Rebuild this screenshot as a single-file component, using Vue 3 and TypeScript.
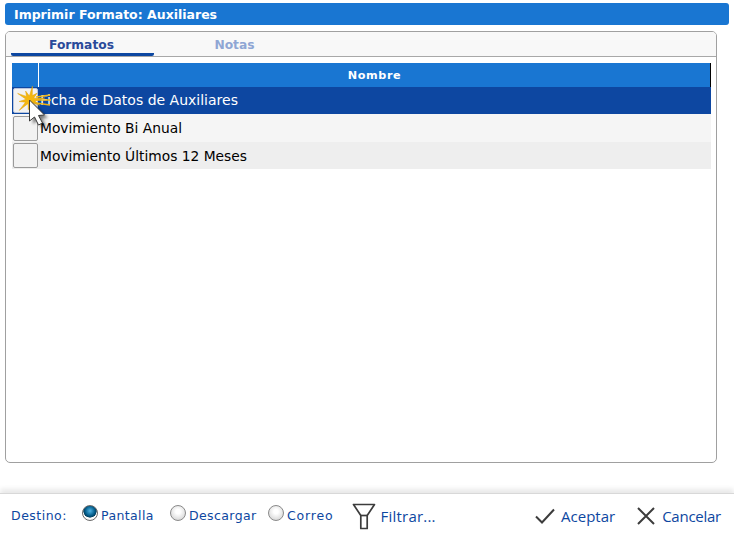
<script setup lang="ts">
interface Row { name: string; cls: string }
const rows: Row[] = [
  { name: 'Ficha de Datos de Auxiliares', cls: 'sel' },
  { name: 'Movimiento Bi Anual', cls: 'odd' },
  { name: 'Movimiento Últimos 12 Meses', cls: 'even' },
]
const cx = 18
const cy = 18
const radii = [14, 5, 10, 4, 15, 5, 11, 4, 14, 5, 10, 4, 15, 5, 11, 4, 14, 5, 10, 4]
const star = radii
  .map((r, i) => {
    const a = ((i * 18 - 80) * Math.PI) / 180
    return `${(cx + r * Math.cos(a)).toFixed(1)},${(cy + r * Math.sin(a)).toFixed(1)}`
  })
  .join(' ')
</script>

<template>
  <div class="page">
    <div class="title">Imprimir Formato: Auxiliares</div>
    <div class="panel">
      <div class="tabs">
        <div class="tab active">Formatos</div>
        <div class="tab second">Notas</div>
      </div>
      <div class="grid">
        <div class="head">
          <div class="head-check"></div>
          <div class="head-name">Nombre</div>
        </div>
        <div v-for="(r, i) in rows" :key="r.name" class="row" :class="r.cls">
          <div class="check" :class="{ focus: i === 0 }"></div>
          <div class="name">{{ r.name }}</div>
        </div>
        <svg class="cursor" width="50" height="50" viewBox="0 0 50 50">
          <defs>
            <filter id="sh" x="-50%" y="-50%" width="200%" height="200%">
              <feGaussianBlur stdDeviation="1.8" />
            </filter>
          </defs>
          <polygon :points="star" fill="#f4b70f" stroke="#e0a20a" stroke-width=".5" />
          <g stroke="#f0b414" stroke-width="1.3">
            <line x1="24" y1="15" x2="38" y2="13" />
            <line x1="24" y1="18" x2="39" y2="18" />
            <line x1="24" y1="21" x2="38" y2="23" />
          </g>
          <path d="M19 19 V40 L24 36 L28 44 L32 42 L28 34.5 L34 34 Z" fill="#000" opacity=".5" filter="url(#sh)" transform="translate(2 2)" />
          <path d="M17.5 18 V39 L22.5 35 L26.5 43 L30.5 41 L26.5 33.5 L32.5 33 Z" fill="#fff" stroke="#3a3a3a" stroke-width="1" stroke-linejoin="round" />
        </svg>
      </div>
    </div>
    <div class="footer">
      <div class="dest">
        <span class="dest-label">Destino:</span>
        <label class="radio r1"><span class="dot on"></span>Pantalla</label>
        <label class="radio r2"><span class="dot"></span>Descargar</label>
        <label class="radio r3"><span class="dot"></span>Correo</label>
      </div>
      <div class="action filter">
        <svg width="24" height="27" viewBox="0 0 24 27" fill="none" stroke="#3c3c3c" stroke-width="1.7">
          <path d="M1.5 1.5 H22.5 L15.2 12.5 V25.5 H8.8 V12.5 Z" stroke-linejoin="round" />
          <path d="M8.8 12.5 H15.2" />
        </svg>
        <span>Filtrar...</span>
      </div>
      <div class="spacer"></div>
      <div class="action ok">
        <svg width="20" height="16" viewBox="0 0 20 16" fill="none" stroke="#3c3c3c" stroke-width="2">
          <path d="M1 8.5 L7 14.5 L19 1.5" />
        </svg>
        <span>Aceptar</span>
      </div>
      <div class="action cancel">
        <svg width="18" height="18" viewBox="0 0 18 18" fill="none" stroke="#3c3c3c" stroke-width="2">
          <path d="M1 1 L17 17 M17 1 L1 17" />
        </svg>
        <span>Cancelar</span>
      </div>
    </div>
  </div>
</template>

<style>
html, body { margin: 0; background: #fff; }
</style>

<style scoped>
.page {
  width: 734px;
  height: 538px;
  box-sizing: border-box;
  padding-top: 3px;
  display: flex;
  flex-direction: column;
  font-family: "DejaVu Sans", sans-serif;
  overflow: hidden;
  background: #fff;
}
.title {
  margin-left: 5px;
  width: 724px;
  height: 22px;
  box-sizing: border-box;
  background: #1976d2;
  border-radius: 3px;
  color: #fff;
  font-weight: 700;
  font-size: 12.5px;
  line-height: 23px;
  padding-left: 9px;
  flex: none;
}
.panel {
  margin: 6px 0 0 5px;
  width: 712px;
  height: 432px;
  box-sizing: border-box;
  border: 1px solid #a0a0a0;
  border-radius: 5px;
  flex: none;
  overflow: hidden;
}
.tabs {
  height: 25px;
  box-sizing: border-box;
  display: flex;
  background: #f8f8f8;
  border-bottom: 1px solid #a8a8a8;
  padding-left: 5px;
}
.tab {
  width: 143px;
  height: 24px;
  box-sizing: border-box;
  text-align: center;
  font-size: 12.25px;
  font-weight: 700;
  line-height: 26px;
  color: #8fa6d4;
}
.tab.active {
  color: #2a4a9a;
  border-bottom: 3px solid #0d47a1;
  border-radius: 0 0 2px 2px;
  padding-right: 2px;
}
.tab.second { margin-left: 9px; }
.grid {
  position: relative;
  margin: 6px 0 0 6px;
  width: 699px;
}
.head {
  height: 24px;
  display: flex;
  background: #1976d2;
  border-right: 1px solid #000;
  box-sizing: border-box;
}
.head-check {
  width: 26px;
  border-right: 1px solid #fff;
  flex: none;
}
.head-name {
  flex: 1;
  text-align: center;
  color: #fff;
  font-size: 11.2px;
  font-weight: 700;
  line-height: 25px;
  letter-spacing: .6px;
}
.row {
  display: flex;
  align-items: center;
  height: 27px;
  font-size: 13.8px;
  color: #000;
}
.row.sel { background: #0d47a1; color: #fff; font-size: 14px; }
.row.odd { background: #f5f5f5; height: 28px; }
.row.even { background: #eee; }
.check {
  width: 25px;
  height: 25px;
  box-sizing: border-box;
  border: 1px solid #9a9a9a;
  border-radius: 2px;
  background: #f2f2f2;
  margin-left: 1px;
  flex: none;
}
.check.focus { border-color: #b8c4dc; }
.name { margin-left: 2px; white-space: nowrap; }
.row.sel .name { position: relative; top: -1px; }
.cursor {
  position: absolute;
  left: 0;
  top: 19px;
  pointer-events: none;
}
.footer {
  margin-top: 30px;
  height: 44px;
  border-top: 1px solid #d8d8d8;
  box-shadow: 0 -4px 5px rgba(0, 0, 0, .09);
  display: flex;
  align-items: center;
  color: #0d47a1;
  font-size: 13px;
  background: #fff;
  flex: none;
  position: relative;
}
.dest {
  display: flex;
  align-items: center;
  margin-left: 11px;
  font-size: 12.5px;
  letter-spacing: .4px;
  line-height: 16px;
}
.dest-label { width: 71px; letter-spacing: .5px; }
.radio { display: flex; align-items: center; }
.r1 { width: 88px; }
.r2 { width: 98px; }
.r3 { letter-spacing: .85px; }
.dot {
  width: 16px;
  height: 16px;
  box-sizing: border-box;
  border-radius: 50%;
  border: 1px solid #8a8a8a;
  background: radial-gradient(circle at 50% 40%, #fff 20%, #d4d4d4 85%);
  margin-right: 3px;
  position: relative;
  top: -3px;
}
.dot.on {
  background: radial-gradient(circle at 50% 35%, #4fb4e4 0, #05608f 40%, #03405f 56%, #fff 60%, #e2e2e2 100%);
  border-color: #6a6a6a;
}
.action { display: flex; align-items: center; font-family: "Open Sans", sans-serif; font-size: 15px; }
.filter { gap: 5px; margin-left: 18px; letter-spacing: .2px; }
.spacer { flex: 1; }
.ok { gap: 6px; margin-right: 22px; }
.cancel { gap: 7px; margin-right: 13px; letter-spacing: -.25px; }
</style>
